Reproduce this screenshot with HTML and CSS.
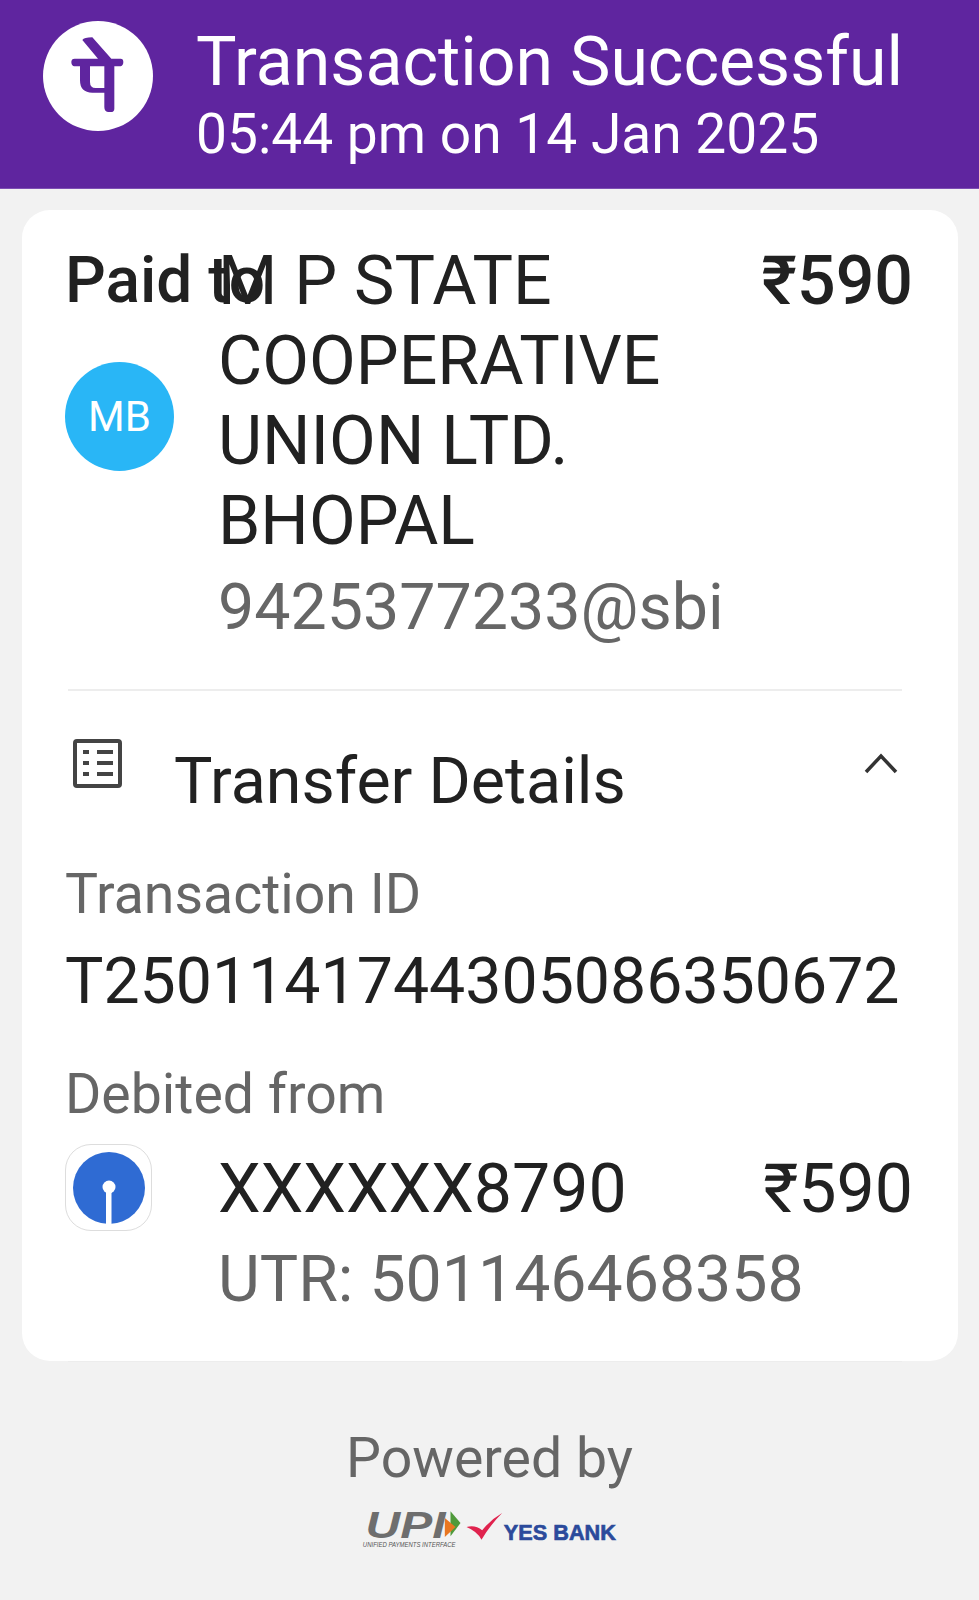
FILE: index.html
```html
<!DOCTYPE html>
<html lang="en">
<head>
    <meta charset="UTF-8">
    <meta name="viewport" content="width=device-width, initial-scale=1.0">
    <title>Transaction Successful</title>
    <link rel="stylesheet" href="styles.css">
</head>
<body>

    <header class="top-bar">
        <div class="brand-circle">
            <svg width="110" height="110" viewBox="67 17 330 330">
                <path d="M185 74 Q190 66 215 66 L272 130 L300 130 Q308 130 308 140 Q308 150 300 153 L281 153 L281 280 Q281 290 270 290 L262 290 Q251 288 251 275 L251 232 L215 232 Q178 232 178 195 L178 153 L160 153 Q152 150 152 140 Q152 130 162 130 L232 130 Z M208 153 L208 200 Q208 218 225 218 L251 218 L251 153 Z" fill="#5f259f" fill-rule="evenodd"/>
            </svg>
        </div>
        <div class="top-text">
            <div class="top-title">Transaction Successful</div>
            <div class="top-date">05:44 pm on 14 Jan 2025</div>
        </div>
    </header>

    <main class="card">
        <div class="paid-to">Paid to</div>

        <section class="payee-row">
            <div class="avatar">MB</div>
            <div class="payee-info">
                <div class="payee-name">M P STATE COOPERATIVE UNION LTD. BHOPAL</div>
                <div class="payee-upi">9425377233@sbi</div>
            </div>
            <div class="amount-bold">₹590</div>
        </section>

        <div class="divider"></div>

        <section class="details-head">
            <svg class="list-icon" width="50" height="50" viewBox="0 0 50 50">
                <rect x="2" y="2" width="45" height="45" rx="2" fill="none" stroke="#444" stroke-width="4"/>
                <path d="M10 13h6M10 24h6M10 35h6M24 13h16M24 24h16M24 35h16" stroke="#444" stroke-width="4" fill="none"/>
            </svg>
            <div class="details-title">Transfer Details</div>
            <svg class="chevron" width="36" height="24" viewBox="0 0 36 24">
                <path d="M3 21 L18 5 L33 21" fill="none" stroke="#333" stroke-width="3.5"/>
            </svg>
        </section>

        <div class="label txn-label">Transaction ID</div>
        <div class="txn-id">T2501141744305086350672</div>

        <div class="label debit-label">Debited from</div>
        <section class="debit-row">
            <div class="bank-logo">
                <svg width="74" height="74" viewBox="0 0 74 74">
                    <circle cx="37" cy="37" r="36" fill="#2f6bd3"/>
                    <rect x="34" y="38" width="5.5" height="36" fill="#fff"/>
                    <circle cx="37" cy="36" r="6.5" fill="#fff"/>
                </svg>
            </div>
            <div class="debit-info">
                <div class="debit-top">
                    <span>XXXXXX8790</span>
                    <span>₹590</span>
                </div>
                <div class="utr">UTR: 501146468358</div>
            </div>
        </section>
    </main>

    <div class="divider bottom-divider"></div>

    <footer class="footer">
        <div class="powered">Powered by</div>
        <!-- upi and yes bank strip, units are 3x screen px -->
        <svg class="logos" width="267" height="50" viewBox="52 40 800 150">
            <text class="upi-word" x="80" y="145" textLength="240" lengthAdjust="spacingAndGlyphs">UPI</text>
            <path d="M335 65 L365 100 L335 140 Z" fill="#4f9a3b"/>
            <path d="M318 85 L350 112 L318 142 Z" fill="#e87722"/>
            <text class="upi-sub" x="72" y="172" textLength="278" lengthAdjust="spacingAndGlyphs">UNIFIED PAYMENTS INTERFACE</text>
            <path d="M383 112 Q410 105 430 122 Q455 90 490 70 Q455 105 428 150 Q415 125 383 112 Z" fill="#e0234e"/>
            <text class="yes-word" x="495" y="150" textLength="336" lengthAdjust="spacingAndGlyphs">YES BANK</text>
        </svg>
    </footer>

</body>
</html>
```

FILE: styles.css
```css
body {
    margin: 0;
    font-family: Roboto, "Liberation Sans", sans-serif;
    background-color: #f2f2f2;
    color: #212121;
}

.top-bar {
    display: flex;
    align-items: center;
    height: 188px;
    padding-left: 43px;
    gap: 43px;
    background-color: #5f259f;
    color: #fff;
    border-bottom: 1px solid #7d4fb3;
}

.brand-circle {
    display: flex;
    align-items: center;
    justify-content: center;
    width: 110px;
    height: 110px;
    margin-top: -36px;
    border-radius: 50%;
    background-color: #fff;
    flex-shrink: 0;
}

.top-text {
    padding-top: 2px;
}

.top-title {
    margin-bottom: 2px;
    font-size: 68px;
    line-height: 76px;
}

.top-date {
    font-size: 55.1px;
    line-height: 64px;
}

.card {
    position: relative;
    margin: 21px 21px 0 22px;
    height: 1151px;
    padding: 0 45px 0 43px;
    box-sizing: border-box;
    background-color: #fff;
    border-radius: 28px;
}

.paid-to {
    position: absolute;
    left: 43px;
    top: 31px;
    font-size: 64px;
    line-height: 80px;
    font-weight: 500;
}

.payee-row {
    display: flex;
    align-items: flex-start;
    padding-top: 31px;
}

.avatar {
    display: flex;
    align-items: center;
    justify-content: center;
    width: 109px;
    height: 109px;
    margin-top: 121px;
    border-radius: 50%;
    background-color: #29b6f6;
    color: #fff;
    font-size: 42px;
    flex-shrink: 0;
}

.payee-info {
    width: 480px;
    margin-left: 44px;
}

.payee-name {
    font-size: 68px;
    line-height: 80px;
}

.payee-upi {
    margin-top: 6px;
    font-size: 64.5px;
    line-height: 80px;
    color: #666;
}

.amount-bold {
    margin-left: auto;
    font-size: 68px;
    line-height: 80px;
    font-weight: 500;
}

.divider {
    height: 2px;
    background-color: #ededed;
}

.card .divider {
    margin: 42px 11px 0 3px;
}

.bottom-divider {
    margin: -1px 77px 0 68px;
}

.details-head {
    display: flex;
    align-items: flex-start;
    height: 100px;
    padding-top: 48px;
}

.list-icon {
    margin-left: 8px;
    flex-shrink: 0;
}

.details-title {
    margin-left: 51px;
    margin-top: 2px;
    font-size: 64.5px;
    line-height: 80px;
}

.chevron {
    margin-left: auto;
    margin-right: 14px;
    margin-top: 12px;
}

.label {
    font-size: 55.4px;
    line-height: 64px;
    color: #666;
}

.txn-label {
    margin-top: 24px;
}

.txn-id {
    margin-top: 14px;
    font-size: 64.4px;
    line-height: 80px;
}

.debit-label {
    margin-top: 42px;
}

.debit-row {
    display: flex;
    align-items: flex-start;
    margin-top: 14px;
}

.bank-logo {
    display: flex;
    align-items: center;
    justify-content: center;
    width: 85px;
    height: 85px;
    margin-top: 3px;
    border: 1px solid #ddd;
    border-radius: 26px;
    flex-shrink: 0;
}

.debit-info {
    flex: 1;
    margin-left: 66px;
    padding-top: 8px;
}

.debit-top {
    display: flex;
    justify-content: space-between;
    font-size: 68px;
    line-height: 80px;
}

.utr {
    margin-top: 10px;
    font-size: 64.4px;
    line-height: 80px;
    color: #666;
}

.footer {
    display: flex;
    flex-direction: column;
    align-items: center;
}

.powered {
    margin-top: 65px;
    font-size: 55.4px;
    line-height: 64px;
    color: #666;
}

.logos {
    margin-top: 12px;
}

.upi-word {
    font-family: "Liberation Sans", sans-serif;
    font-size: 111px;
    font-style: italic;
    font-weight: 700;
    fill: #6e6e6e;
}

.upi-sub {
    font-family: "Liberation Sans", sans-serif;
    font-size: 22px;
    font-style: italic;
    fill: #555;
}

.yes-word {
    font-family: "Liberation Sans", sans-serif;
    font-size: 68px;
    font-weight: 700;
    fill: #2b4a9b;
    stroke: #2b4a9b;
    stroke-width: 2px;
}
```
